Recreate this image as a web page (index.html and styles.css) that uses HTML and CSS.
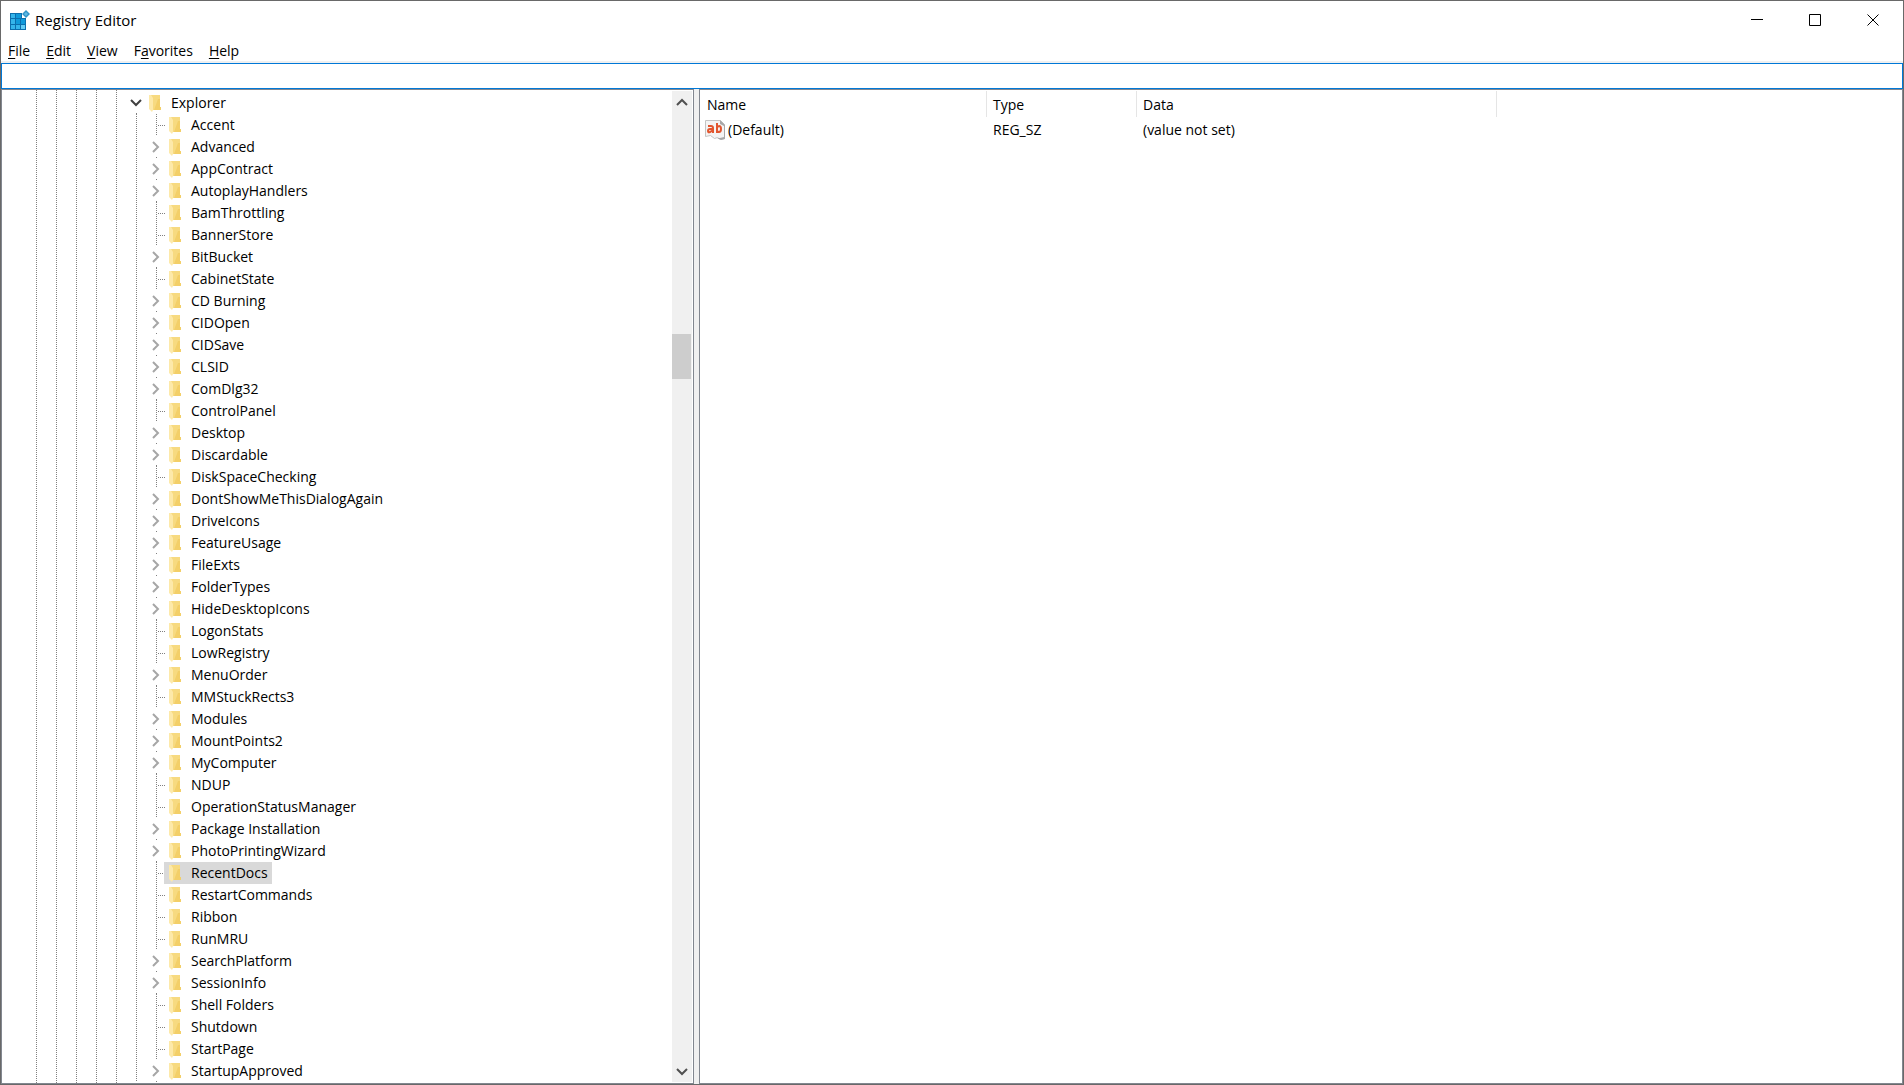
FILE: index.html
```html
<!DOCTYPE html>
<html lang="en">
<head>
<meta charset="utf-8">
<title>Registry Editor</title>
<link rel="stylesheet" href="styles.css">
</head>
<body>
<svg class="defs" aria-hidden="true">
  <symbol id="folder" viewBox="0 0 12 18">
    <path fill="#f7da80" d="M2 1h9v12h1v3H2z"/>
    <path fill="#f3cf68" d="M9 5h2v8h1v3H5z"/>
    <path fill="#fde9a9" d="M0 1h2l2 3v12l-1 2-3-3z"/>
  </symbol>
  <symbol id="right" viewBox="0 0 8 12"><path fill="none" stroke="#a6a6a6" stroke-width="2" d="M1 1l5 5-5 5"/></symbol>
  <symbol id="down" viewBox="0 0 12 8"><path fill="none" stroke="#404040" stroke-width="2" d="M1 1l5 5 5-5"/></symbol>
</svg>
<div class="window">
  <header class="titlebar">
    <svg class="app-icon" viewBox="0 0 20 20" aria-hidden="true">
      <path fill="#0b6fae" d="M0 3h12v5h4v12H0z"/>
      <path fill="#35b5ea" d="M1 4h4v4H1zM1 9h4v5H1zM1 15h4v4H1zM6 15h4v4H6z"/>
      <path fill="#0f9adb" d="M6 4h5v4H6zM6 9h4v5H6zM11 9h4v5h-4z"/>
      <path fill="#63cdf5" d="M11 15h4v4h-4z"/>
      <path fill="#2f93c8" d="M16 0l4 4-4 4-4-4z"/>
      <path fill="#5cb9e4" d="M16 2l2 2-2 2-2-2z"/>
    </svg>
    <h1>Registry Editor</h1>
    <div class="controls">
      <button aria-label="Minimize"><svg viewBox="0 0 12 12"><path d="M0 5.5h12"/></svg></button>
      <button aria-label="Maximize"><svg viewBox="0 0 12 12"><path d="M.5.5h11v11H.5z"/></svg></button>
      <button aria-label="Close"><svg viewBox="0 0 12 12"><path d="M.5.5l11 11M11.5.5l-11 11"/></svg></button>
    </div>
  </header>
  <nav class="menubar">
    <button><u>F</u>ile</button>
    <button><u>E</u>dit</button>
    <button><u>V</u>iew</button>
    <button>F<u>a</u>vorites</button>
    <button><u>H</u>elp</button>
  </nav>
  <input class="address" type="text" aria-label="Address">
  <main class="panes">
    <section class="tree-pane">
      <div class="guides"><i></i><i></i><i></i><i></i><i></i></div>
      <ul class="tree">
        <li class="root branch"><button class="toggle" aria-label="Collapse"><svg class="open"><use href="#down"/></svg></button><span class="key"><svg><use href="#folder"/></svg>Explorer</span></li>
        <li class="nested"><ul>
          <li><span class="key"><svg><use href="#folder"/></svg>Accent</span></li>
          <li class="branch"><button class="toggle" aria-label="Expand"><svg><use href="#right"/></svg></button><span class="key"><svg><use href="#folder"/></svg>Advanced</span></li>
          <li class="branch"><button class="toggle" aria-label="Expand"><svg><use href="#right"/></svg></button><span class="key"><svg><use href="#folder"/></svg>AppContract</span></li>
          <li class="branch"><button class="toggle" aria-label="Expand"><svg><use href="#right"/></svg></button><span class="key"><svg><use href="#folder"/></svg>AutoplayHandlers</span></li>
          <li><span class="key"><svg><use href="#folder"/></svg>BamThrottling</span></li>
          <li><span class="key"><svg><use href="#folder"/></svg>BannerStore</span></li>
          <li class="branch"><button class="toggle" aria-label="Expand"><svg><use href="#right"/></svg></button><span class="key"><svg><use href="#folder"/></svg>BitBucket</span></li>
          <li><span class="key"><svg><use href="#folder"/></svg>CabinetState</span></li>
          <li class="branch"><button class="toggle" aria-label="Expand"><svg><use href="#right"/></svg></button><span class="key"><svg><use href="#folder"/></svg>CD Burning</span></li>
          <li class="branch"><button class="toggle" aria-label="Expand"><svg><use href="#right"/></svg></button><span class="key"><svg><use href="#folder"/></svg>CIDOpen</span></li>
          <li class="branch"><button class="toggle" aria-label="Expand"><svg><use href="#right"/></svg></button><span class="key"><svg><use href="#folder"/></svg>CIDSave</span></li>
          <li class="branch"><button class="toggle" aria-label="Expand"><svg><use href="#right"/></svg></button><span class="key"><svg><use href="#folder"/></svg>CLSID</span></li>
          <li class="branch"><button class="toggle" aria-label="Expand"><svg><use href="#right"/></svg></button><span class="key"><svg><use href="#folder"/></svg>ComDlg32</span></li>
          <li><span class="key"><svg><use href="#folder"/></svg>ControlPanel</span></li>
          <li class="branch"><button class="toggle" aria-label="Expand"><svg><use href="#right"/></svg></button><span class="key"><svg><use href="#folder"/></svg>Desktop</span></li>
          <li class="branch"><button class="toggle" aria-label="Expand"><svg><use href="#right"/></svg></button><span class="key"><svg><use href="#folder"/></svg>Discardable</span></li>
          <li><span class="key"><svg><use href="#folder"/></svg>DiskSpaceChecking</span></li>
          <li class="branch"><button class="toggle" aria-label="Expand"><svg><use href="#right"/></svg></button><span class="key"><svg><use href="#folder"/></svg>DontShowMeThisDialogAgain</span></li>
          <li class="branch"><button class="toggle" aria-label="Expand"><svg><use href="#right"/></svg></button><span class="key"><svg><use href="#folder"/></svg>DriveIcons</span></li>
          <li class="branch"><button class="toggle" aria-label="Expand"><svg><use href="#right"/></svg></button><span class="key"><svg><use href="#folder"/></svg>FeatureUsage</span></li>
          <li class="branch"><button class="toggle" aria-label="Expand"><svg><use href="#right"/></svg></button><span class="key"><svg><use href="#folder"/></svg>FileExts</span></li>
          <li class="branch"><button class="toggle" aria-label="Expand"><svg><use href="#right"/></svg></button><span class="key"><svg><use href="#folder"/></svg>FolderTypes</span></li>
          <li class="branch"><button class="toggle" aria-label="Expand"><svg><use href="#right"/></svg></button><span class="key"><svg><use href="#folder"/></svg>HideDesktopIcons</span></li>
          <li><span class="key"><svg><use href="#folder"/></svg>LogonStats</span></li>
          <li><span class="key"><svg><use href="#folder"/></svg>LowRegistry</span></li>
          <li class="branch"><button class="toggle" aria-label="Expand"><svg><use href="#right"/></svg></button><span class="key"><svg><use href="#folder"/></svg>MenuOrder</span></li>
          <li><span class="key"><svg><use href="#folder"/></svg>MMStuckRects3</span></li>
          <li class="branch"><button class="toggle" aria-label="Expand"><svg><use href="#right"/></svg></button><span class="key"><svg><use href="#folder"/></svg>Modules</span></li>
          <li class="branch"><button class="toggle" aria-label="Expand"><svg><use href="#right"/></svg></button><span class="key"><svg><use href="#folder"/></svg>MountPoints2</span></li>
          <li class="branch"><button class="toggle" aria-label="Expand"><svg><use href="#right"/></svg></button><span class="key"><svg><use href="#folder"/></svg>MyComputer</span></li>
          <li><span class="key"><svg><use href="#folder"/></svg>NDUP</span></li>
          <li><span class="key"><svg><use href="#folder"/></svg>OperationStatusManager</span></li>
          <li class="branch"><button class="toggle" aria-label="Expand"><svg><use href="#right"/></svg></button><span class="key"><svg><use href="#folder"/></svg>Package Installation</span></li>
          <li class="branch"><button class="toggle" aria-label="Expand"><svg><use href="#right"/></svg></button><span class="key"><svg><use href="#folder"/></svg>PhotoPrintingWizard</span></li>
          <li><span class="key selected"><svg><use href="#folder"/></svg>RecentDocs</span></li>
          <li><span class="key"><svg><use href="#folder"/></svg>RestartCommands</span></li>
          <li><span class="key"><svg><use href="#folder"/></svg>Ribbon</span></li>
          <li><span class="key"><svg><use href="#folder"/></svg>RunMRU</span></li>
          <li class="branch"><button class="toggle" aria-label="Expand"><svg><use href="#right"/></svg></button><span class="key"><svg><use href="#folder"/></svg>SearchPlatform</span></li>
          <li class="branch"><button class="toggle" aria-label="Expand"><svg><use href="#right"/></svg></button><span class="key"><svg><use href="#folder"/></svg>SessionInfo</span></li>
          <li><span class="key"><svg><use href="#folder"/></svg>Shell Folders</span></li>
          <li><span class="key"><svg><use href="#folder"/></svg>Shutdown</span></li>
          <li><span class="key"><svg><use href="#folder"/></svg>StartPage</span></li>
          <li class="branch"><button class="toggle" aria-label="Expand"><svg><use href="#right"/></svg></button><span class="key"><svg><use href="#folder"/></svg>StartupApproved</span></li>
        </ul></li>
      </ul>
      <div class="scrollbar">
        <button aria-label="Scroll up"><svg viewBox="0 0 12 8"><path d="M1 7l5-5 5 5"/></svg></button>
        <div class="track"><div class="thumb"></div></div>
        <button aria-label="Scroll down"><svg viewBox="0 0 12 8"><path d="M1 1l5 5 5-5"/></svg></button>
      </div>
    </section>
    <section class="value-pane">
      <table>
        <colgroup><col class="col-name"><col class="col-type"><col class="col-data"></colgroup>
        <thead><tr><th>Name</th><th>Type</th><th>Data</th></tr></thead>
        <tbody><tr>
          <td><div class="value-name"><svg viewBox="0 0 20 20" aria-hidden="true">
            <path fill="#f4f4f4" stroke="#c4c4c4" d="M.5.5h15l4 4v14l-4 1-3-2-3 1-4-3-5 1z"/>
            <path fill="#a8a8a8" d="M15 0l5 5v14l-4 1-4-2h3l4-1V6l-4-2z"/>
            <g fill="none" stroke="#e2562f" stroke-width="2"><path d="M3 6h3q2 0 2 2v5M8 9H5q-2 0-2 2t2 1 3-2M12 3v10M12 8q1-2 2-2 2 0 2 3t-2 3-2-2"/></g>
          </svg>(Default)</div></td>
          <td>REG_SZ</td>
          <td>(value not set)</td>
        </tr></tbody>
      </table>
    </section>
  </main>
</div>
</body>
</html>
```
FILE: styles.css
```css
* { box-sizing: border-box; }

body {
  margin: 0;
  background: #fff;
  color: #000;
  font: 14px/22px "Open Sans", "Segoe UI", sans-serif;
}

button {
  padding: 0;
  border: 0;
  background: none;
  color: inherit;
  font: inherit;
}

.defs { position: absolute; width: 0; height: 0; }

.window {
  display: flex;
  flex-direction: column;
  min-height: 100vh;
  border: 1px solid #696969;
}

.titlebar { display: flex; align-items: center; height: 37px; padding-left: 9px; }
.app-icon { width: 20px; height: 20px; margin-right: 5px; }
.titlebar h1 { margin: 0; font-size: 15px; font-weight: 400; }
.controls { display: flex; margin-left: auto; padding-right: 1px; align-self: stretch; }
.controls button { display: grid; place-items: center; width: 58px; }
.controls svg { width: 12px; height: 12px; fill: none; stroke: #000; }

.menubar {
  display: flex;
  gap: 16px;
  height: 25px;
  padding: 2px 7px 0;
  border-bottom: 2px solid #f0f0f0;
}
.menubar button { height: 22px; }
.menubar u { text-underline-offset: 2px; }

.address {
  width: 100%;
  height: 26px;
  padding: 0 6px;
  border: 1px solid #0078d7;
  outline: 0;
  background: #fff;
  font: inherit;
}

.panes { display: flex; flex: 1; gap: 5px; background: #f0f0f0; }

.tree-pane {
  display: flex;
  width: 693px;
  padding: 0 1px 0 0;
  border: 1px solid #828790;
  background: #fff;
}

.guides { display: flex; padding-left: 34px; }
.guides i {
  width: 20px;
  background: repeating-linear-gradient(#808080 0 1px, transparent 1px 2px) 0 0 / 1px 100% no-repeat;
}

.tree, .tree ul { margin: 0; padding: 0; list-style: none; }
.tree { flex: 1; margin-left: -2px; padding-top: 2px; }

/* Each row carries its own piece of the dotted connector. */
.tree li:not(.nested) {
  display: flex;
  height: 22px;
  padding-left: 10px;
  background:
    repeating-linear-gradient(#808080 0 1px, transparent 1px 2px) 2px 0 / 1px 100% no-repeat,
    repeating-linear-gradient(90deg, #808080 0 1px, transparent 1px 2px) 4px 11px / 7px 1px no-repeat;
}
.tree li.branch:not(.nested) {
  padding-left: 0;
  background: linear-gradient(#808080, #808080) 2px 100% / 1px 1px no-repeat;
}
.tree .nested {
  padding-left: 20px;
  background: repeating-linear-gradient(#808080 0 1px, transparent 1px 2px) 2px 0 / 1px 100% no-repeat;
}

.toggle { display: grid; place-items: center; width: 12px; margin: 0 2px 0 -4px; }
.toggle svg { width: 8px; height: 12px; }
.toggle .open { width: 12px; height: 8px; }

.key { display: flex; align-items: center; gap: 10px; padding: 0 4px 0 5px; }
.key svg { width: 12px; height: 18px; }
.selected { background: #d9d9d9; }

.scrollbar { display: flex; flex-direction: column; width: 20px; margin: 1px 0; background: #f0f0f0; }
.scrollbar button { display: grid; place-items: center; height: 21px; }
.scrollbar svg { width: 12px; height: 8px; fill: none; stroke: #505050; stroke-width: 2; }
.track { flex: 1; display: grid; grid-template-rows: 222fr 45fr 682fr; }
.thumb { grid-row: 2; width: 19px; background: #cdcdcd; }

.value-pane { flex: 1; padding-top: 1px; border: 1px solid #828790; background: #fff; }
table { border-collapse: separate; border-spacing: 0; table-layout: fixed; width: 797px; }
.col-name { width: 287px; }
.col-type { width: 150px; }
.col-data { width: 360px; }
th, td { padding: 0 6px; text-align: left; font-weight: 400; }
th:first-child, td:first-child { padding-left: 7px; }
th { height: 26px; padding-top: 2px; border-right: 1px solid #e5e5e5; }
td { height: 25px; }
.value-name { display: flex; align-items: center; gap: 3px; margin-left: -2px; }
.value-name svg { width: 20px; height: 20px; }
```
